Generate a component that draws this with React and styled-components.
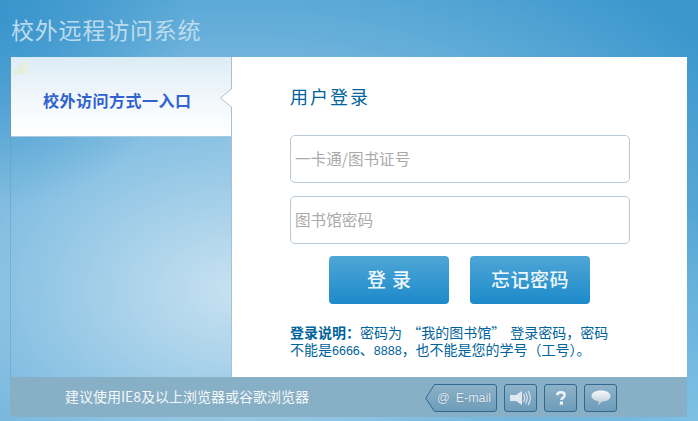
import React from "react";
import styled, { createGlobalStyle } from "styled-components";

const Global = createGlobalStyle`
  html, body {
    margin: 0;
    padding: 0;
    overflow: hidden;
  }
  body {
    font-family: "Noto Sans CJK SC", "Liberation Sans", sans-serif;
  }
`;

const Page = styled.div`
  width: 698px;
  height: 421px;
  box-sizing: border-box;
  padding: 0 11px 4px 11px;
  display: flex;
  flex-direction: column;
  background:
    radial-gradient(circle 190px at 0 15px, rgba(52, 146, 203, 0.85) 0%, rgba(52, 146, 203, 0) 100%),
    radial-gradient(circle 210px at 698px 421px, rgba(135, 198, 232, 0.85) 0%, rgba(135, 198, 232, 0) 100%),
    radial-gradient(ellipse 600px 400px at 240px 290px, #c8e2f1 0%, #85bfe2 42%, #5aa8d6 74%, #3a96cc 100%);
`;

const Title = styled.h1`
  margin: 0;
  height: 57px;
  box-sizing: border-box;
  padding-top: 15px;
  font: 400 23px/28px "Noto Sans CJK SC", sans-serif;
  letter-spacing: 0.8px;
  color: #bcdcee;
`;

const Main = styled.div`
  height: 320px;
  display: flex;
`;

const Side = styled.nav`
  width: 220px;
  flex: none;
  border-right: 1px solid #a9c0cf;
  box-shadow: -1px 0 0 rgba(120, 150, 170, 0.5);
`;

const SideTab = styled.div`
  position: relative;
  height: 80px;
  box-sizing: border-box;
  display: flex;
  align-items: center;
  padding: 6px 0 0 32px;
  font: 700 16px/20px "Noto Sans CJK SC", sans-serif;
  letter-spacing: 0.5px;
  color: #2f62cf;
  background: linear-gradient(180deg, #dcecf5 0%, #f3f8fc 55%, #ffffff 100%);
  border-bottom: 1px solid #a9cbe0;

  &::before,
  &::after {
    content: "";
    position: absolute;
    top: 31px;
    width: 12px;
    height: 20px;
    clip-path: polygon(100% 0, 0 50%, 100% 100%);
  }
  &::before {
    right: -1px;
    background: #9fb4c2;
  }
  &::after {
    right: -2px;
    background: #fff;
  }
`;

const Bars = styled.svg`
  position: absolute;
  left: 0;
  top: 3px;
  opacity: 0.75;
`;

const Panel = styled.section`
  flex: 1;
  background: #fff;
  padding: 27px 0 0 58px;
`;

const Heading = styled.h2`
  margin: 0 0 27px;
  font: 400 18px/24px "Noto Sans CJK SC", sans-serif;
  letter-spacing: 2px;
  color: #00639b;
`;

const Fields = styled.div`
  display: flex;
  flex-direction: column;
  gap: 13px;
`;

const Field = styled.div`
  width: 340px;
  height: 48px;
  box-sizing: border-box;
  padding: 0 0 3px 4px;
  display: flex;
  align-items: center;
  border: 1px solid #b9c9d8;
  border-radius: 5px;
  font: 400 15.6px/20px "Noto Sans CJK SC", sans-serif;
  color: #aaa;
`;

const Buttons = styled.div`
  display: flex;
  gap: 21px;
  margin: 12px 0 0 39px;
`;

const Button = styled.button`
  width: 120px;
  height: 48px;
  border: 0;
  border-radius: 4px;
  padding: 0 0 3px ${(p) => (p.$wide ? "6px" : "0")};
  background: linear-gradient(180deg, #4fa6d6 0%, #1c8aca 100%);
  color: #eef7fc;
  font: 500 19px "Noto Sans CJK SC", sans-serif;
  letter-spacing: ${(p) => (p.$wide ? "6px" : "0.5px")};
`;

const Note = styled.p`
  margin: 20px 0 0;
  width: 340px;
  font: 400 14px/17px "Noto Sans CJK SC", sans-serif;
  word-spacing: 2px;
  color: #00639b;
  b {
    font-weight: 700;
  }
`;

const Digits = styled.span`
  font: 400 12.5px/17px "Liberation Sans", sans-serif;
`;

const Footer = styled.footer`
  height: 40px;
  margin-left: -1px;
  display: flex;
  align-items: center;
  background: #87afc5;
  padding: 0 70px 0 55px;
`;

const Advice = styled.span`
  flex: 1;
  font: 400 14px/18px "Noto Sans CJK SC", sans-serif;
  color: #f4f8fb;
  margin-top: -3px;
`;

const Tools = styled.div`
  display: flex;
  align-items: center;
  gap: 7px;
  margin-top: 2px;
`;

const ToolButton = styled.a`
  width: 33px;
  height: 28px;
  box-sizing: border-box;
  display: flex;
  align-items: center;
  justify-content: center;
  border: 1px solid #33698f;
  border-radius: 3px;
  background: linear-gradient(180deg, #8db2c8 0%, #6d9cb9 100%);
`;

const MailTab = styled.a`
  position: relative;
  width: 72px;
  height: 28px;
  box-sizing: border-box;
  padding-left: 12px;
  display: flex;
  align-items: center;
  gap: 6px;
  font: 400 12.5px/14px "Liberation Sans", sans-serif;
  color: #e6edf2;
  text-shadow: 0 0 1px #4a7694;

  span {
    position: relative;
  }
`;

const MailShape = styled.svg`
  position: absolute;
  left: 0;
  top: 0;
`;

const SpeakerIcon = () => (
  <svg width="22" height="16" viewBox="0 0 22 16">
    <path d="M0 5h6l6-4v14l-6-4H0z" fill="#dfe8ee" />
    <path d="M13.500 4c1.500 2.500 1.500 5.500 0 8M15.500 2.500c2.200 3.500 2.200 7.500 0 11M18 1c3 4.500 3 9.500 0 14" fill="none" stroke="#e4ecf1" strokeWidth="1.100" />
  </svg>
);

const HelpIcon = () => (
  <svg width="10" height="14" viewBox="0 0 10 14">
    <path d="M1.300 4.200C1.300 2.200 2.900 1.300 5 1.300s3.700 1.100 3.700 2.900c0 2.500-3.300 2.500-3.300 4.800" fill="none" stroke="#eef3f6" strokeWidth="2.400" />
    <rect x="3.800" y="10.500" width="3.200" height="3.200" fill="#eef3f6" />
  </svg>
);

const BubbleIcon = () => (
  <svg width="20" height="16" viewBox="0 0 20 16">
    <defs>
      <linearGradient id="bubble" x1="0" y1="0" x2="0" y2="1">
        <stop offset="0" stopColor="#f7f9fb" />
        <stop offset="1" stopColor="#b6c8d4" />
      </linearGradient>
    </defs>
    <path d="M10 0.500c5.200 0 9.500 2.200 9.500 5.500s-4 5.500-8.500 5.500l-4 4 .8-4.300C4 10.700 .5 9 .5 6c0-3.300 4.300-5.500 9.500-5.500z" fill="url(#bubble)" />
  </svg>
);

export default function App() {
  return (
    <Page>
      <Global />
      <Title>校外远程访问系统</Title>
      <Main>
        <Side>
          <SideTab>
            <Bars width="16" height="14" viewBox="0 0 16 14">
              <path d="M1 10h2v4H1zM4 9h2v5H4zM7 7h2v7H7zM10 5h2v9h-2z" fill="#e3ecc9" />
              <path d="M13 0h3v14h-3z" fill="#f4efc4" />
            </Bars>
            校外访问方式一入口
          </SideTab>
        </Side>
        <Panel>
          <Heading>用户登录</Heading>
          <Fields>
            <Field>一卡通/图书证号</Field>
            <Field>图书馆密码</Field>
          </Fields>
          <Buttons>
            <Button $wide>登录</Button>
            <Button>忘记密码</Button>
          </Buttons>
          <Note>
            <b>登录说明：</b>密码为 “我的图书馆” 登录密码，密码
            <br />
            不能是<Digits>6666</Digits>、<Digits>8888</Digits>，也不能是您的学号（工号）。
          </Note>
        </Panel>
      </Main>
      <Footer>
        <Advice>建议使用IE8及以上浏览器或谷歌浏览器</Advice>
        <Tools>
          <MailTab>
            <MailShape width="72" height="28" viewBox="0 0 72 28">
              <defs>
                <linearGradient id="mail" x1="0" y1="0" x2="0" y2="1">
                  <stop offset="0" stopColor="#8db2c8" />
                  <stop offset="1" stopColor="#6d9cb9" />
                </linearGradient>
              </defs>
              <path d="M.7 14 9.500 .5H69a2.500 2.500 0 0 1 2.500 2.500v22a2.500 2.500 0 0 1-2.500 2.500H9.500z" fill="url(#mail)" stroke="#33698f" />
            </MailShape>
            <span>@</span>
            <span>E-mail</span>
          </MailTab>
          <ToolButton><SpeakerIcon /></ToolButton>
          <ToolButton><HelpIcon /></ToolButton>
          <ToolButton><BubbleIcon /></ToolButton>
        </Tools>
      </Footer>
    </Page>
  );
}
